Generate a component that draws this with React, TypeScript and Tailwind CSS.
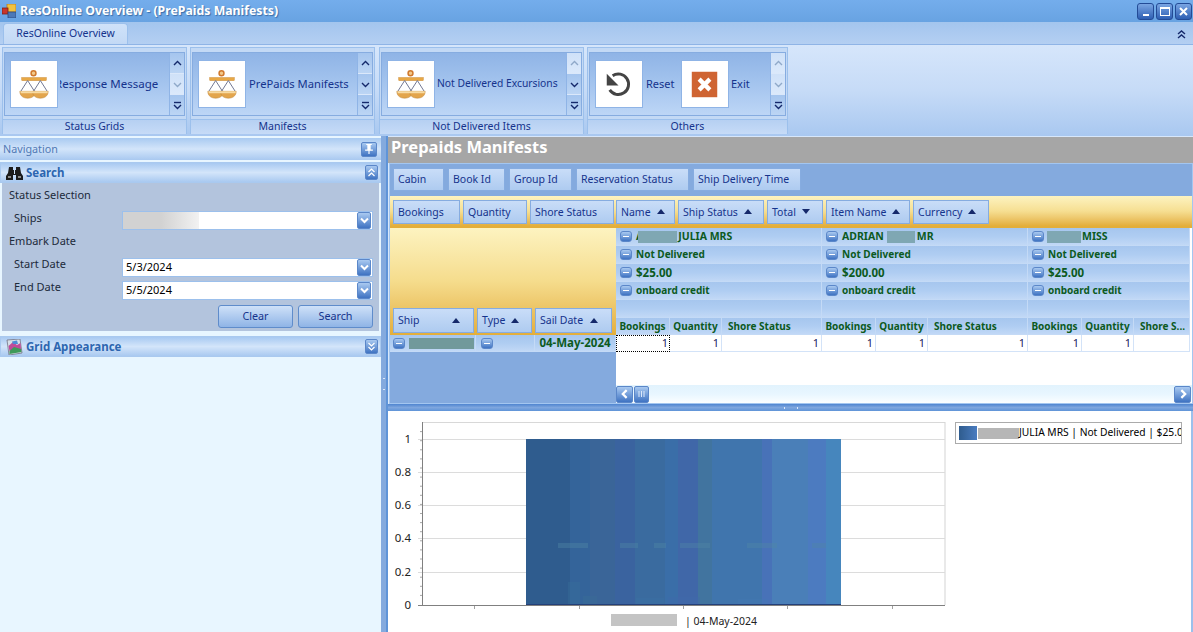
const font = "font-['Noto_Sans','Liberation_Sans',sans-serif]";

function Scale() {
  return (
    <svg viewBox="0 0 47 47" className="h-full w-full">
      <circle cx="23" cy="12.5" r="2.5" fill="#f2c98a" stroke="#d0782c" strokeWidth="1.5" />
      <rect x="11" y="17" width="25" height="3" fill="#e8a845" stroke="#c98428" strokeWidth="0.5" />
      <path d="M17 20 L10 31 M17 20 L24 31 M30 20 L23 31 M30 20 L37 31" stroke="#6f7590" strokeWidth="1" fill="none" />
      <path d="M9 31 H25 C25 36 21 38 17 38 C13 38 9 36 9 31 Z" fill="#e3a54c" stroke="#b9802f" strokeWidth="0.5" />
      <path d="M22 31 H38 C38 36 34 38 30 38 C26 38 22 36 22 31 Z" fill="#e3a54c" stroke="#b9802f" strokeWidth="0.5" />
      <path d="M9.5 31 H24.5 V33 H10 Z M22.5 31 H37.5 V33 H23 Z" fill="#f7dba4" />
    </svg>
  );
}

function ResetIcon() {
  return (
    <svg viewBox="0 0 47 47" className="h-full w-full">
      <path d="M17 15 A10.5 10.5 0 1 1 14 29.5" fill="none" stroke="#444" strokeWidth="3" />
      <path d="M11 13 L11 25 L23 25 Z" fill="#444" />
    </svg>
  );
}

function ExitIcon() {
  return (
    <svg viewBox="0 0 47 47" className="h-full w-full">
      <rect x="10" y="11" width="26" height="26" fill="#cf6432" />
      <path d="M17.5 18.5 L28.5 29.5 M28.5 18.5 L17.5 29.5" stroke="#fff" strokeWidth="4.4" />
    </svg>
  );
}

function IconTile({ children }: { children: React.ReactNode }) {
  return <div className="h-[48px] w-[48px] shrink-0 border border-[#8fb4e6] bg-white">{children}</div>;
}

function Chev({ dir, className }: { dir: 'up' | 'down' | 'more'; className: string }) {
  return (
    <svg viewBox="0 0 9 9" className={`h-[9px] w-[9px] ${className}`} fill="none" stroke="currentColor" strokeWidth="1.4">
      {dir === 'up' && <path d="M1 6 L4.5 2.5 L8 6" />}
      {dir === 'down' && <path d="M1 3 L4.5 6.5 L8 3" />}
      {dir === 'more' && (
        <>
          <path d="M1 1.5 H8" />
          <path d="M1 4 L4.5 7.5 L8 4" />
        </>
      )}
    </svg>
  );
}

function GalleryScroll({ up = true, down = true }: { up?: boolean; down?: boolean }) {
  const on = 'bg-linear-to-b from-[#a5c5ee] to-[#bcd5f4] text-[#15296b]';
  const off = 'bg-linear-to-b from-[#cfe1f8] to-[#dbe9fb] text-[#8fa9c9]';
  return (
    <div className="flex w-[15px] shrink-0 flex-col gap-px border-l border-[#8fb4e6] bg-[#dbe8fa]">
      <div className={`flex flex-1 items-center justify-center ${up ? on : off}`}><Chev dir="up" className="" /></div>
      <div className={`flex flex-1 items-center justify-center ${down ? on : off}`}><Chev dir="down" className="" /></div>
      <div className={`flex flex-1 items-center justify-center ${on}`}><Chev dir="more" className="" /></div>
    </div>
  );
}

function RibbonGroup({ width, caption, children, up, down }: {
  width: string;
  caption: string;
  children: React.ReactNode;
  up?: boolean;
  down?: boolean;
}) {
  return (
    <div className={`flex h-[87px] shrink-0 flex-col border border-[#9cc0ec] ${width} bg-[#c3d9f5]`}>
      <div className="mx-px mt-[4px] flex h-[64px] shrink-0 border border-[#86ace0] bg-linear-to-b from-[#8fb4e6] via-[#a4c4ee] to-[#bdd6f6]">
        <div className="flex min-w-0 flex-1 items-center pl-[5px]">{children}</div>
        <GalleryScroll up={up} down={down} />
      </div>
      <div className="mt-[3px] flex h-[15px] shrink-0 items-center justify-center border-t border-[#9cc0ec] bg-linear-to-b from-[#b6d0f2] to-[#c6dbf7] pb-px text-[10.5px] leading-none text-[#15338c]">
        {caption}
      </div>
    </div>
  );
}

function WinButton({ children }: { children: React.ReactNode }) {
  return (
    <div className="flex h-[17px] w-[17px] items-center justify-center rounded-[3px] border border-[#234b96] bg-linear-to-b from-[#7aa5e3] to-[#2e5fb3]">
      {children}
    </div>
  );
}

function MiniButton({ children, className = '' }: { children: React.ReactNode; className?: string }) {
  return (
    <div className={`flex items-center justify-center rounded-[2px] border border-[#5b87c9] bg-linear-to-b from-[#a9c9f0] to-[#3f73c2] text-white ${className}`}>
      {children}
    </div>
  );
}

function PanelHeader({ title, icon, open }: { title: string; icon: React.ReactNode; open: boolean }) {
  return (
    <div className="flex h-[21px] items-center border border-[#a9c9ef] bg-linear-to-b from-[#a8c9f1] via-[#d3e5fa] to-[#a9c9f0] pl-[5px] pr-[2px]">
      <div className="h-[16px] w-[17px] shrink-0">{icon}</div>
      <span className="ml-[3px] flex-1 text-[11.5px] font-bold text-[#2d66b0]">{title}</span>
      <MiniButton className="h-[15px] w-[13px]">
        <svg viewBox="0 0 9 9" className="h-[9px] w-[9px]" fill="none" stroke="#fff" strokeWidth="1.2">
          {open ? <path d="M1.5 4 L4.5 1 L7.5 4 M1.5 8 L4.5 5 L7.5 8" /> : <path d="M1.5 1 L4.5 4 L7.5 1 M1.5 5 L4.5 8 L7.5 5" />}
        </svg>
      </MiniButton>
    </div>
  );
}

function Binoculars() {
  return (
    <svg viewBox="0 0 17 16" className="h-full w-full" fill="#1b1b1b">
      <path d="M3 2 H7 V5 H8 V9 H9 V5 H10 V2 H14 L15 8 L17 11 V15 H10 V10 H7 V15 H0 V11 L2 8 Z" />
      <path d="M2 11 H5 V13 H2 Z M12 11 H15 V13 H12 Z" fill="#8a8a8a" />
    </svg>
  );
}

function GridAppearanceIcon() {
  return (
    <svg viewBox="0 0 17 16" className="h-full w-full">
      <path d="M1 1 L14 0 L16 14 L3 16 Z" fill="#d6dfe8" stroke="#667" strokeWidth="0.7" />
      <path d="M2.5 7 L7 3 L11 6 L14.5 4 L15 10 L3.5 12 Z" fill="#c04a9a" />
      <path d="M3.5 12 L8 8 L15 10 L15.5 13 L3.5 15 Z" fill="#3f9a5a" />
      <path d="M6 2.5 L11 1.5 L12 5 L7 5 Z" fill="#4d8ad6" />
    </svg>
  );
}

function DateField({ value, blurred }: { value?: string; blurred?: boolean }) {
  return (
    <div className="flex h-[19px] w-[251px] items-center border border-[#9cc0ec] bg-white pr-px">
      <div className="flex flex-1 items-center pl-[3px] text-[11px] text-black">
        {blurred && <div className="-ml-[3px] h-[17px] w-[76px] bg-linear-to-r from-[#d2d2d2] via-[#d2d2d2] to-[#f2f2f2]" />}
        {value}
      </div>
      <MiniButton className="h-[17px] w-[14px]">
        <svg viewBox="0 0 9 9" className="h-[9px] w-[9px]" fill="none" stroke="#fff" strokeWidth="2"><path d="M1 2.5 L4.5 6 L8 2.5" /></svg>
      </MiniButton>
    </div>
  );
}

function FormRow({ label, indent, children, top }: { label: string; indent?: boolean; children?: React.ReactNode; top?: string }) {
  return (
    <div className="flex h-[23px]">
      <div className={`flex h-[23px] w-[122px] items-center text-[11px] text-[#1c2a3a] ${indent ? 'pl-[12px]' : 'pl-[7px]'}`}>{label}</div>
      {children && <div className={top}>{children}</div>}
    </div>
  );
}

function FormButton({ label }: { label: string }) {
  return (
    <div className="flex h-[23px] w-[75px] items-center justify-center rounded-[3px] border border-[#5f8ccb] bg-linear-to-b from-[#cfe1f8] to-[#8fb4e6] text-[10.75px] text-[#15338c]">
      {label}
    </div>
  );
}

function SortArrow({ down }: { down?: boolean }) {
  return (
    <svg viewBox="0 0 8 5" className="mb-[2px] ml-[6px] h-[5px] w-[8px] shrink-0" fill="#15296b">
      {down ? <path d="M0 0 H8 L4 5 Z" /> : <path d="M0 5 H8 L4 0 Z" />}
    </svg>
  );
}

function Chip({ label, width, sort, spread }: { label: string; width: string; sort?: 'up' | 'down'; spread?: boolean }) {
  return (
    <div className={`flex shrink-0 items-center border border-[#86ace0] bg-linear-to-b from-[#c9ddf8] to-[#aecbf0] pl-[4px] pt-px text-[10.5px] text-[#15338c] ${spread ? 'pr-[13px]' : 'pr-[4px]'} ${width}`}>
      <span className={spread ? 'flex-1 whitespace-nowrap' : 'whitespace-nowrap'}>{label}</span>
      {sort && <SortArrow down={sort === 'down'} />}
    </div>
  );
}

function Minus({ className = '' }: { className?: string }) {
  return (
    <MiniButton className={`h-[11px] w-[12px] shrink-0 rounded-[3px] ${className}`}>
      <div className="h-px w-[6px] bg-white" />
    </MiniButton>
  );
}

const rowHead = 'border-b border-r border-[#c4daf6] bg-linear-to-b from-[#a6c6ee] via-[#afcdf2] to-[#c1d8f6] text-[10px] font-bold text-[#0c5a1e]';

function FieldRow({ children }: { children?: React.ReactNode }) {
  return (
    <div className={`flex h-[18px] items-center gap-[4px] whitespace-nowrap pl-[4px] ${rowHead}`}>
      {children && <Minus />}
      {children}
    </div>
  );
}

function Masked({ width }: { width: string }) {
  return <span className={`relative inline-block h-[12px] align-middle ${width} bg-[#7fa7b3]`} />;
}

function PivotColumn({ width, name, amount, clipped, focused }: {
  width: string;
  name: React.ReactNode;
  amount: string;
  clipped?: boolean;
  focused?: boolean;
}) {
  const cell = 'flex h-[17px] items-center justify-end border-b border-r border-[#d3e3f8] pr-[2px] text-[11px] text-[#1a1a5e]';
  const head = `flex h-[17px] items-center justify-center overflow-hidden whitespace-nowrap ${rowHead}`;
  return (
    <div className={`${width} shrink-0`}>
      <FieldRow><span className="text-[10.5px]">{name}</span></FieldRow>
      <FieldRow>Not Delivered</FieldRow>
      <FieldRow><span className="text-[11.5px]">{amount}</span></FieldRow>
      <FieldRow>onboard credit</FieldRow>
      <FieldRow />
      <div className="flex">
        <div className={`${head} w-[54px]`}>Bookings</div>
        <div className={`${head} w-[52px]`}>Quantity</div>
        <div className={`${head} flex-1 !justify-start pl-[6px]`}>{clipped ? 'Shore S...' : 'Shore Status'}</div>
      </div>
      <div className="flex bg-white">
        <div className={focused
          ? 'flex h-[17px] w-[54px] items-center justify-end border border-dotted border-black pr-[1px] text-[11px] text-[#1a1a5e]'
          : `${cell} w-[54px]`}>1</div>
        <div className={`${cell} w-[52px]`}>1</div>
        <div className={`${cell} flex-1`}>{clipped ? '' : '1'}</div>
      </div>
    </div>
  );
}

function PivotGrid() {
  return (
    <div className="ml-px flex h-[241px] flex-col border border-[#a3c6f0] bg-white">
      <div className="flex h-[32px] shrink-0 gap-[4px] bg-[#84aade] pb-[5px] pl-[3px] pt-[4px]">
        <Chip label="Cabin" width="w-[51px]" />
        <Chip label="Book Id" width="w-[57px]" />
        <Chip label="Group Id" width="w-[63px]" />
        <Chip label="Reservation Status" width="w-[113px]" />
        <Chip label="Ship Delivery Time" width="w-[108px]" />
      </div>
      <div className="flex h-[32px] shrink-0 gap-[3px] border-b-[2px] border-[#e3ae3a] bg-linear-to-b from-[#fdf3c0] via-[#f6df92] to-[#e3ae3a] pb-[2px] pl-[3px] pt-[4px]">
        <Chip label="Bookings" width="w-[67px]" />
        <Chip label="Quantity" width="w-[64px]" />
        <Chip label="Shore Status" width="w-[84px]" />
        <Chip label="Name" sort="up" width="-ml-px w-[59px]" />
        <Chip label="Ship Status" sort="up" width="w-[86px]" />
        <Chip label="Total" sort="down" width="w-[56px]" />
        <Chip label="Item Name" sort="up" width="w-[84px]" />
        <Chip label="Currency" sort="up" width="w-[76px]" />
      </div>
      <div className="flex min-h-0 flex-1">
        <div className="flex w-[226px] shrink-0 flex-col bg-[#84aade]">
          <div className="flex h-[107px] items-end gap-[3px] bg-linear-to-b from-[#fdf3c0] via-[#f5dc8c] to-[#e3ae3a] pb-[2px] pl-[3px]">
            <Chip label="Ship" sort="up" spread width="h-[25px] w-[81px]" />
            <Chip label="Type" sort="up" width="h-[25px] w-[55px]" />
            <Chip label="Sail Date" sort="up" spread width="h-[25px] w-[77px]" />
          </div>
          <div className="flex h-[17px]">
            <div className={`flex w-[86px] items-center gap-[4px] pl-[3px] ${rowHead}`}>
              <Minus />
              <span className="h-[11px] w-[65px] bg-[#71999b]" />
            </div>
            <div className={`flex w-[59px] items-center pl-[5px] ${rowHead}`}><Minus /></div>
            <div className={`flex flex-1 items-center justify-center whitespace-nowrap ${rowHead}`}><span className="text-[11.5px]">04-May-2024</span></div>
          </div>
        </div>
        <div className="flex min-w-0 flex-1 flex-col">
          <div className="flex h-[157px] shrink-0 overflow-hidden">
            <PivotColumn
              width="w-[206px]"
              focused
              name={<span>A<Masked width="-ml-[5px] mr-[1px] w-[39px]" />JULIA MRS</span>}
              amount="$25.00"
            />
            <PivotColumn
              width="w-[206px]"
              name={<span>ADRIAN<Masked width="ml-[3px] mr-[2px] w-[28px]" />MR</span>}
              amount="$200.00"
            />
            <PivotColumn
              width="w-[162px]"
              name={<span><Masked width="ml-[-1px] mr-px w-[34px]" />MISS</span>}
              amount="$25.00"
              clipped
            />
          </div>
          <div className="flex h-[18px] shrink-0 items-center justify-between bg-linear-to-b from-[#e2f3fd] via-[#e8f6ff] to-[#fbfeff] pr-[1px]">
            <div className="flex gap-px">
              <MiniButton className="h-[17px] w-[17px]">
                <svg viewBox="0 0 9 9" className="h-[10px] w-[10px]" fill="none" stroke="#fff" strokeWidth="2"><path d="M6 1 L2.5 4.5 L6 8" /></svg>
              </MiniButton>
              <MiniButton className="h-[17px] w-[15px]">
                <svg viewBox="0 0 7 6" className="h-[6px] w-[7px]" stroke="#dbe8fa" strokeWidth="1"><path d="M1 0 V6 M3.5 0 V6 M6 0 V6" /></svg>
              </MiniButton>
            </div>
            <MiniButton className="h-[17px] w-[17px]">
              <svg viewBox="0 0 9 9" className="h-[10px] w-[10px]" fill="none" stroke="#fff" strokeWidth="2"><path d="M3 1 L6.5 4.5 L3 8" /></svg>
            </MiniButton>
          </div>
        </div>
      </div>
    </div>
  );
}

const barStripes: [number, number, string][] = [
  [526, 570, '#2f5c8e'], [570, 590, '#34649a'], [590, 615, '#3a6598'], [615, 635, '#3a639f'],
  [635, 665, '#3a6b9f'], [665, 678, '#3a6ea8'], [678, 698, '#4067a8'], [698, 712, '#41749f'],
  [712, 762, '#4075ad'], [762, 772, '#4872b8'], [772, 808, '#4a7fb8'], [808, 826, '#4c7bc0'], [826, 841, '#4686bd'],
];
const barSpots: [number, number][] = [[558, 30], [620, 18], [654, 12], [680, 30], [747, 30], [812, 14]];
const barBlobs: [number, number, number, string][] = [
  [568, 12, 22, '#38709a'], [583, 14, 8, '#3c6f94'], [636, 28, 6, '#3d74a6'], [668, 32, 7, '#4169ac'], [738, 30, 5, '#4578b4'],
];

function Chart() {
  // everything in here is in page coordinates, the svg starts at x=388, y=411
  const grid = [439, 472, 505, 538, 572];
  const labels = ['1', '0.8', '0.6', '0.4', '0.2'];
  const minor = Array.from({ length: 19 }, (_, i) => 422 + (i + 1) * 9.1);
  return (
    <svg viewBox="388 411 567 221" className="h-[221px] w-[567px] shrink-0">
      <rect x="422" y="422" width="523" height="0.9" fill="#d4d4d4" />
      <rect x="944.5" y="422" width="1" height="183" fill="#d4d4d4" />
      {grid.map((y) => (
        <rect key={y} x="418" y={y} width="527" height="1" fill="#dcdcdc" />
      ))}
      {minor.map((y) => (
        <rect key={y} x="420" y={y} width="2" height="1" fill="#a8a8a8" />
      ))}
      {barStripes.map(([a, b, c]) => (
        <rect key={a} x={a} y="439" width={b - a} height="166" fill={c} />
      ))}
      {barSpots.map(([x, w]) => (
        <rect key={x} x={x} y="543" width={w} height="5" fill="#4f86a6" opacity="0.4" />
      ))}
      {barBlobs.map(([x, w, h, c]) => (
        <rect key={x} x={x} y={604 - h} width={w} height={h} fill={c} opacity="0.35" />
      ))}
      <rect x="526" y="604" width="315" height="1" fill="#24407a" />
      <rect x="422" y="422" width="1" height="184" fill="#808080" />
      <rect x="418" y="605" width="527" height="1" fill="#808080" />
      {[474, 579, 683, 787, 892].map((x) => (
        <rect key={x} x={x} y="606" width="1" height="3" fill="#a0a0a0" />
      ))}
      {labels.map((l, i) => (
        <text key={l} x="411" y={grid[i] + 4} textAnchor="end" fontSize="11.5" fill="#222" fontFamily="Noto Sans">{l}</text>
      ))}
      <text x="411" y="609" textAnchor="end" fontSize="11.5" fill="#222" fontFamily="Noto Sans">0</text>
      <rect x="611" y="614" width="66" height="12" fill="#c4c4c4" />
      <text x="685" y="625" fontSize="10.5" fill="#222" fontFamily="Noto Sans">| 04-May-2024</text>
    </svg>
  );
}

export default function App() {
  return (
    <div className={`flex h-[632px] w-[1193px] flex-col overflow-hidden bg-[#c9dcf6] ${font}`}>
      {/* title bar */}
      <div className="flex h-[22px] shrink-0 items-center bg-linear-to-b from-[#74adec] to-[#68a3e2] pl-[2px] pr-[1px]">
        <svg viewBox="0 0 14 14" className="h-[14px] w-[14px] shrink-0">
          <rect x="5" y="0" width="9" height="8" fill="#f2c240" stroke="#b87a20" strokeWidth="0.8" />
          <rect x="0" y="4" width="6" height="6" fill="#c8352b" stroke="#7a2018" strokeWidth="0.8" />
          <rect x="6" y="8" width="8" height="6" fill="#4c78b8" stroke="#2c4a80" strokeWidth="0.8" />
        </svg>
        <span className="ml-[4px] flex-1 text-[12.3px] font-bold text-white [text-shadow:1px_1px_1px_#3c6ea8]">ResOnline Overview - (PrePaids Manifests)</span>
        <div className="flex gap-[2px]">
          <WinButton><div className="mt-[8px] h-[2px] w-[6px] bg-white" /></WinButton>
          <WinButton><div className="h-[9px] w-[10px] border border-t-2 border-white" /></WinButton>
          <WinButton>
            <svg viewBox="0 0 9 9" className="h-[9px] w-[9px]" stroke="#fff" strokeWidth="2"><path d="M1 1 L8 8 M8 1 L1 8" /></svg>
          </WinButton>
        </div>
      </div>

      {/* tab strip */}
      <div className="flex h-[22px] shrink-0 items-end justify-between bg-linear-to-b from-[#a3c5ee] to-[#b4cff2] pl-[3px] pr-[7px]">
        <div className="flex h-[21px] w-[125px] items-center justify-center rounded-t-[4px] border border-b-0 border-[#9cc0ec] bg-linear-to-b from-[#cfe2f9] to-[#c3d9f5] text-[10.5px] text-[#15338c]">
          ResOnline Overview
        </div>
        <svg viewBox="0 0 9 9" className="mb-[5px] h-[9px] w-[9px]" fill="none" stroke="#15296b" strokeWidth="1.4"><path d="M1 4 L4.5 1 L8 4 M1 8 L4.5 5 L8 8" /></svg>
      </div>

      {/* ribbon */}
      <div className="flex h-[92px] shrink-0 gap-[3px] border-t border-[#8fb4e6] bg-linear-to-b from-[#d6e6fb] via-[#c6dbf7] to-[#a9c8f0] pl-[2px] pt-[2px]">
        <RibbonGroup width="w-[185px]" caption="Status Grids" down={false}>
          <IconTile><Scale /></IconTile>
          <div className="ml-[2px] flex-1 overflow-hidden whitespace-nowrap text-[11.5px] text-[#15338c]"><span className="-ml-[5px] inline-block">Response Message</span></div>
        </RibbonGroup>
        <RibbonGroup width="w-[185px]" caption="Manifests">
          <IconTile><Scale /></IconTile>
          <span className="ml-[3px] whitespace-nowrap text-[11.2px] text-[#15338c]">PrePaids Manifests</span>
        </RibbonGroup>
        <RibbonGroup width="ml-px w-[205px]" caption="Not Delivered Items" up={false}>
          <IconTile><Scale /></IconTile>
          <span className="ml-[2px] whitespace-nowrap text-[10.3px] text-[#15338c]">Not Delivered Excursions</span>
        </RibbonGroup>
        <RibbonGroup width="w-[201px]" caption="Others" up={false} down={false}>
          <IconTile><ResetIcon /></IconTile>
          <span className="ml-[3px] w-[35px] text-[11px] text-[#15338c]">Reset</span>
          <IconTile><ExitIcon /></IconTile>
          <span className="ml-[2px] text-[11px] text-[#15338c]">Exit</span>
        </RibbonGroup>
      </div>

      {/* main */}
      <div className="flex min-h-0 flex-1">
        <div className="flex w-[381px] shrink-0 flex-col bg-[#e8f6ff]">
          <div className="mt-[2px] flex h-[22px] shrink-0 items-center justify-between bg-linear-to-b from-[#a9caf1] via-[#d3e5fa] to-[#a9c9f0] pl-[3px] pr-[4px] text-[10.75px] text-[#5079b5]">
            Navigation
            <MiniButton className="h-[15px] w-[16px]">
              <svg viewBox="0 0 9 9" className="h-[10px] w-[10px]" fill="#fff"><path d="M2 0 H7 V1 H6 V5 H8 V6 H5 V9 H4 V6 H1 V5 H3 V1 H2 Z" /></svg>
            </MiniButton>
          </div>
          <div className="mt-[2px]">
            <PanelHeader title="Search" icon={<Binoculars />} open />
          </div>
          <div className="mx-[2px] h-[148px] shrink-0 bg-[#b3c4dd] pt-[1px]">
            <FormRow label="Status Selection" />
            <FormRow label="Ships" indent top="mt-[4px] -ml-[2px]"><DateField blurred /></FormRow>
            <FormRow label="Embark Date" />
            <FormRow label="Start Date" indent top="mt-[5px] -ml-[2px]"><DateField value="5/3/2024" /></FormRow>
            <FormRow label="End Date" indent top="mt-[5px] -ml-[2px]"><DateField value="5/5/2024" /></FormRow>
            <div className="mt-[6px] flex justify-end gap-[5px] pr-[6px]">
              <FormButton label="Clear" />
              <FormButton label="Search" />
            </div>
          </div>
          <div className="mt-[5px]">
            <PanelHeader title="Grid Appearance" icon={<GridAppearanceIcon />} open={false} />
          </div>
        </div>

        <div className="flex w-[5px] shrink-0 items-center justify-center bg-[#84aade]">
          <div className="h-[12px] w-[2px] border-y border-[#dbe8fa]" />
        </div>

        <div className="flex min-w-0 flex-1 flex-col border-l-[2px] border-[#5f94d8] bg-[#d7e7fb]">
          <div className="mt-px h-[26px] shrink-0 bg-[#a6a6a6] pl-[3px] text-[16.5px] font-bold leading-[20px] text-white">
            Prepaids Manifests
          </div>
          <PivotGrid />
          <div className="flex h-[7px] shrink-0 items-center justify-center bg-linear-to-b from-[#4f85d0] via-[#7ea6de] to-[#5f94d8]">
            <div className="h-[2px] w-[14px] border-x border-[#dbe8fa]" />
          </div>
          <div className="flex h-[221px] shrink-0 border-r-[2px] border-[#9cc0ec] bg-white">
            <Chart />
            <div className="mt-[11px] flex h-[22px] w-[227px] items-center overflow-hidden whitespace-nowrap border-[1.5px] border-[#ababab] pl-[3px] text-[10.25px] text-black">
              <div className="mr-px h-[14px] w-[18px] shrink-0 bg-linear-to-r from-[#2f5c8e] to-[#4a7cc0]" />
              <div className="h-[11px] w-[41px] shrink-0 bg-[#b6b6b6]" />
              <span>JULIA MRS | Not Delivered | $25.00</span>
            </div>
          </div>
        </div>
      </div>
    </div>
  );
}
